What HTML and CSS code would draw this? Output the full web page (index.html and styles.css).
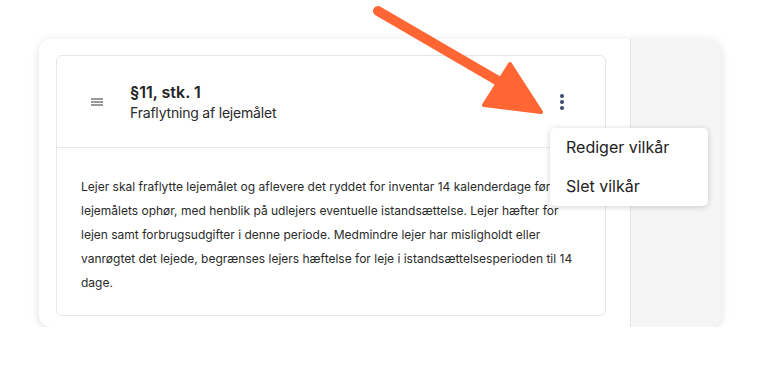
FILE: index.html
```html
<!DOCTYPE html>
<html lang="da">

<head>
  <meta charset="UTF-8">
  <meta name="viewport" content="width=device-width, initial-scale=1.0">
  <title>Vilkår</title>
  <link rel="stylesheet" href="styles.css">
</head>

<body>
  <div class="panel">
    <div class="main">
      <div class="term">
        <div class="term-head">
          <span class="drag">
            <svg width="12" height="8" viewBox="0 0 12 8">
              <path d="M0 1h12M0 4h12M0 7h12" stroke="#7a7a7a" stroke-width="1.3" />
            </svg>
          </span>
          <div class="titles">
            <div class="title">§11, stk. 1</div>
            <div class="subtitle">Fraflytning af lejemålet</div>
          </div>
          <span class="more">
            <svg width="6" height="16" viewBox="0 0 6 16">
              <circle cx="3" cy="2" r="2" fill="#3c4a6e" />
              <circle cx="3" cy="8" r="2" fill="#3c4a6e" />
              <circle cx="3" cy="14" r="2" fill="#3c4a6e" />
            </svg>
          </span>
        </div>
        <div class="term-body">
          Lejer skal fraflytte lejemålet og aflevere det ryddet for inventar 14 kalenderdage før lejemålets ophør, med henblik på udlejers eventuelle istandsættelse. Lejer hæfter for lejen samt forbrugsudgifter i denne periode. Medmindre lejer har misligholdt eller vanrøgtet det lejede, begrænses lejers hæftelse for leje i istandsættelsesperioden til 14 dage.
        </div>
      </div>
    </div>
    <div class="side"></div>
  </div>

  <ul class="menu">
    <li>Rediger vilkår</li>
    <li>Slet vilkår</li>
  </ul>

  <svg class="arrow" width="760" height="140" viewBox="0 0 760 140">
    <line x1="378" y1="11" x2="500" y2="82" stroke="#ff6633" stroke-width="10" stroke-linecap="round" />
    <path d="M510 64 L541 112 L484 105 Z" fill="#ff6633" stroke="#ff6633" stroke-width="4" stroke-linejoin="round" />
  </svg>
</body>

</html>
```

FILE: styles.css
```css
body {
  margin: 0;
  background: #fff;
  font-family: Inter, "Liberation Sans", sans-serif;
  color: #222;
}

.panel {
  display: flex;
  width: 682px;
  height: 288px;
  margin: 39px 0 0 39px;
  border-radius: 12px;
  background: #fff;
  box-shadow: 0 2px 10px rgba(0, 0, 0, 0.13);
  overflow: hidden;
}

.main {
  width: 591px;
  padding: 16px 24px 11px 17px;
  box-sizing: border-box;
}

.side {
  flex: 1;
  background: #f5f5f5;
  border-left: 1px solid #e4e4e4;
}

.term {
  height: 100%;
  border: 1px solid #e6e6e6;
  border-radius: 6px;
  box-sizing: border-box;
}

.term-head {
  display: flex;
  align-items: center;
  height: 91px;
  padding: 0 40px 0 34px;
  border-bottom: 1px solid #e9e9e9;
}

.drag {
  display: flex;
  margin-right: 27px;
  margin-top: 1px;
}

.titles {
  flex: 1;
}

.title {
  font-size: 16px;
  font-weight: 600;
  line-height: 22px;
}

.subtitle {
  font-size: 14px;
  line-height: 20px;
  letter-spacing: -0.2px;
  color: #2a2a2a;
}

.more {
  display: flex;
}

.term-body {
  padding: 27px 24px 0 24px;
  font-size: 12px;
  line-height: 24px;
  color: #2a2a2a;
}

.menu {
  position: absolute;
  left: 550px;
  top: 128px;
  width: 158px;
  margin: 0;
  padding: 0;
  list-style: none;
  background: #fff;
  border-radius: 5px;
  box-shadow: 0 1px 6px rgba(0, 0, 0, 0.18);
}

.menu li {
  padding: 0 16px;
  height: 39px;
  line-height: 39px;
  font-size: 16px;
  color: #222;
}

.arrow {
  position: absolute;
  left: 0;
  top: 0;
}
```
